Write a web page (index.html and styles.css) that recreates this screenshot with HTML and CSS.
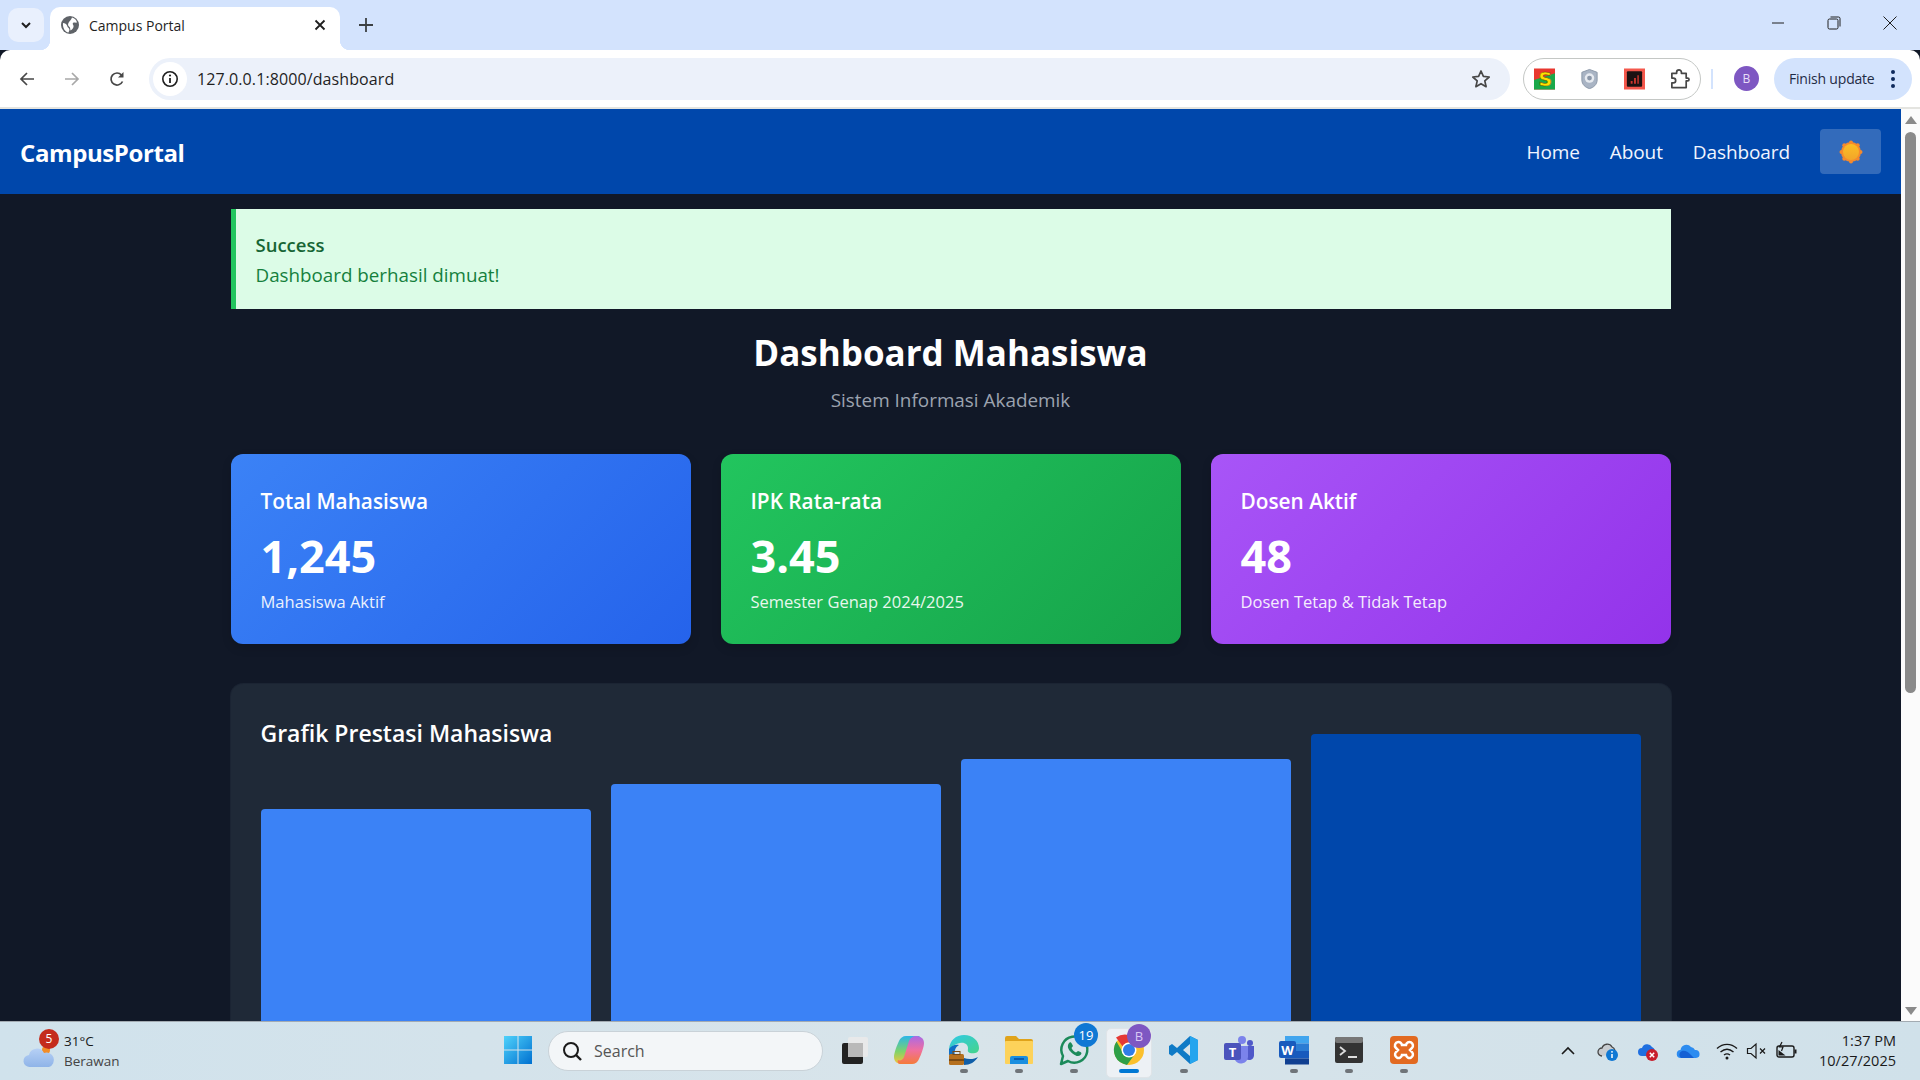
FILE: index.html
```html
<!DOCTYPE html>
<html lang="en">
<head>
    <meta charset="UTF-8">
    <meta name="viewport" content="width=device-width, initial-scale=1.0">
    <title>Campus Portal</title>
    <link rel="stylesheet" href="styles.css">
</head>
<body>

<!-- Browser tabs -->
<div class="tab-strip">
    <div class="tab-search">
        <svg width="14" height="14" viewBox="0 0 14 14"><path d="M3 5l4 4 4-4" fill="none" stroke="#1f1f1f" stroke-width="2"/></svg>
    </div>
    <div class="tab">
        <svg width="18" height="18" viewBox="0 0 18 18"><circle cx="9" cy="9" r="9" fill="#5f6368"/><path d="M11 1.500c2.500.5 4.500 2.500 5 5-1.500.5-3-.5-4 .5s1 2 .5 4-2 3-3 3.500c-.5-1.500 0-3-1.500-4s-1-3 0-4.500 2.500-2.500 3-4.500zM2 7c2 0 3.500 1 4 2.500s1 2 2 3 0 3-.5 4C4 16 1.500 12 2 7z" fill="#fff"/></svg>
        <span class="tab-title">Campus Portal</span>
        <svg class="tab-close" width="12" height="12" viewBox="0 0 12 12"><path d="M1.500 1.500l9 9M10.500 1.500l-9 9" stroke="#1f1f1f" stroke-width="1.800"/></svg>
    </div>
    <div class="new-tab">
        <svg width="14" height="14" viewBox="0 0 14 14"><path d="M7 0v14M0 7h14" stroke="#3c4043" stroke-width="1.800"/></svg>
    </div>
    <div class="window-controls">
        <div class="win-btn"><svg width="14" height="14" viewBox="0 0 14 14"><path d="M1 7h12" stroke="#1f1f1f" stroke-width="1"/></svg></div>
        <div class="win-btn"><svg width="14" height="14" viewBox="0 0 14 14"><rect x="1" y="3" width="10" height="10" rx="1.500" fill="none" stroke="#1f1f1f"/><path d="M3.500 1h8a1.500 1.500 0 0 1 1.500 1.500v8" fill="none" stroke="#1f1f1f"/></svg></div>
        <div class="win-btn"><svg width="14" height="14" viewBox="0 0 14 14"><path d="M.5.5l13 13M13.500.5l-13 13" stroke="#1f1f1f" stroke-width="1"/></svg></div>
    </div>
</div>

<!-- Browser toolbar -->
<div class="toolbar">
    <div class="tool-btn"><svg width="16" height="16" viewBox="0 0 16 16"><path d="M15 8H2M8 2L2 8l6 6" fill="none" stroke="#474747" stroke-width="1.700"/></svg></div>
    <div class="tool-btn"><svg width="16" height="16" viewBox="0 0 16 16"><path d="M1 8h13M8 2l6 6-6 6" fill="none" stroke="#a8a8a8" stroke-width="1.700"/></svg></div>
    <div class="tool-btn"><svg width="16" height="16" viewBox="0 0 16 16"><path d="M13.500 10.500A6 6 0 1 1 12.500 4" fill="none" stroke="#474747" stroke-width="1.700"/><path d="M14.500 1v5.500H9z" fill="#474747"/></svg></div>
    <div class="omnibox">
        <div class="site-info"><svg width="18" height="18" viewBox="0 0 18 18"><circle cx="9" cy="9" r="7.200" fill="none" stroke="#1f1f1f" stroke-width="1.600"/><path d="M9 8v5" stroke="#1f1f1f" stroke-width="1.800"/><circle cx="9" cy="5.500" r="1.100" fill="#1f1f1f"/></svg></div>
        <span class="url">127.0.0.1:8000/dashboard</span>
        <svg class="star" width="20" height="20" viewBox="0 0 20 20"><path d="M10 2l2.400 5.400 5.800.6-4.400 3.900 1.300 5.800L10 14.700l-5.100 3 1.300-5.800L1.800 8l5.800-.6z" fill="none" stroke="#474747" stroke-width="1.700" stroke-linejoin="round"/></svg>
    </div>
    <div class="ext-pill">
        <svg width="22" height="22" viewBox="0 0 22 22"><rect width="22" height="22" fill="#e8372f"/><path d="M0 22V12L22 5v17z" fill="#1aa84a"/><text x="12" y="18" class="ext-s">S</text></svg>
        <svg width="22" height="22" viewBox="0 0 22 22"><path d="M11 1l8 3v8c0 5-4 8-8 9-4-1-8-4-8-9V4z" fill="#a9b4c4" stroke="#8b97a8"/><circle cx="11" cy="10" r="5" fill="#e6eaf0"/><circle cx="11" cy="10" r="2.500" fill="#8b97a8"/></svg>
        <svg width="22" height="22" viewBox="0 0 22 22"><rect width="22" height="22" fill="#f4584c"/><rect x="3" y="3" width="16" height="16" rx="1" fill="#1b1212"/><path d="M7 13h2v3H7zM10.500 10h2v6h-2zM14 7h1.500v9H14z" fill="#c9352c"/></svg>
        <svg width="22" height="22" viewBox="0 0 22 22"><path d="M3 5h5V4a2.500 2.500 0 0 1 5 0v1h5v5h1.500a1.500 1.500 0 0 1 0 3H18v7H3v-5h1.500a2.500 2.500 0 0 0 0-5H3z" fill="none" stroke="#474747" stroke-width="1.800" stroke-linejoin="round"/></svg>
    </div>
    <div class="toolbar-sep"></div>
    <div class="avatar">B</div>
    <div class="finish-update">
        <span>Finish update</span>
        <span class="kebab"><i></i><i></i><i></i></span>
    </div>
</div>

<!-- Page area -->
<div class="viewport">
    <div class="page">
        <nav class="navbar">
            <div class="brand">CampusPortal</div>
            <div class="nav-links">
                <a>Home</a>
                <a>About</a>
                <a>Dashboard</a>
                <button class="theme-toggle">
                    <svg width="24" height="24" viewBox="0 0 24 24">
                        <defs><linearGradient id="sunFill" x1="0" y1="0" x2="0" y2="1"><stop offset="0" stop-color="#fbbf24"/><stop offset="1" stop-color="#f2a52a"/></linearGradient></defs>
                        <g fill="#f58a2c">
                            <circle cx="12" cy="2.500" r="2"/><circle cx="12" cy="21.500" r="2"/><circle cx="2.500" cy="12" r="2"/><circle cx="21.500" cy="12" r="2"/>
                            <circle cx="5.300" cy="5.300" r="2"/><circle cx="18.700" cy="5.300" r="2"/><circle cx="5.300" cy="18.700" r="2"/><circle cx="18.700" cy="18.700" r="2"/>
                            <circle cx="12" cy="12" r="10"/>
                        </g>
                        <circle cx="12" cy="12" r="8" fill="url(#sunFill)"/>
                    </svg>
                </button>
            </div>
        </nav>

        <main class="container">
            <div class="alert">
                <div class="alert-title">Success</div>
                <div class="alert-text">Dashboard berhasil dimuat!</div>
            </div>

            <div class="heading">
                <h1>Dashboard Mahasiswa</h1>
                <p>Sistem Informasi Akademik</p>
            </div>

            <div class="stats">
                <div class="stat-card blue">
                    <h3>Total Mahasiswa</h3>
                    <div class="stat-value">1,245</div>
                    <p>Mahasiswa Aktif</p>
                </div>
                <div class="stat-card green">
                    <h3>IPK Rata-rata</h3>
                    <div class="stat-value">3.45</div>
                    <p>Semester Genap 2024/2025</p>
                </div>
                <div class="stat-card purple">
                    <h3>Dosen Aktif</h3>
                    <div class="stat-value">48</div>
                    <p>Dosen Tetap &amp; Tidak Tetap</p>
                </div>
            </div>

            <section class="chart-panel">
                <h2>Grafik Prestasi Mahasiswa</h2>
                <div class="bars">
                    <div class="bar h1"></div>
                    <div class="bar h2"></div>
                    <div class="bar h3"></div>
                    <div class="bar h4 dark"></div>
                </div>
            </section>
        </main>
    </div>

    <div class="scrollbar">
        <div class="arrow-up"></div>
        <div class="thumb"></div>
        <div class="arrow-down"></div>
    </div>
</div>

<!-- Windows taskbar -->
<footer class="taskbar">
    <div class="weather">
        <div class="weather-icon">
            <svg width="34" height="30" viewBox="0 0 34 30">
                <defs><linearGradient id="cloudFill" x1="0" y1="0" x2="0" y2="1"><stop offset="0" stop-color="#b6d0f5"/><stop offset="1" stop-color="#8fb4e8"/></linearGradient></defs>
                <circle cx="23" cy="11" r="4" fill="#f28c28"/>
                <path d="M7 28a6 6 0 0 1-1-12 8 8 0 0 1 15-2 7 7 0 0 1 5 14z" fill="url(#cloudFill)"/>
            </svg>
            <span class="weather-badge">5</span>
        </div>
        <div class="weather-text">
            <div class="temp">31°C</div>
            <div class="cond">Berawan</div>
        </div>
    </div>

    <div class="app winlogo">
        <svg width="30" height="30" viewBox="0 0 30 30">
            <defs><linearGradient id="winFill" x1="0" y1="0" x2="1" y2="1"><stop offset="0" stop-color="#4fd2fb"/><stop offset="1" stop-color="#0070d0"/></linearGradient></defs>
            <path d="M1 1h13.500v13.500H1zM15.500 1H29v13.500H15.500zM1 15.500h13.500V29H1zM15.500 15.500H29V29H15.500z" fill="url(#winFill)"/>
        </svg>
    </div>

    <div class="search-box">
        <svg width="22" height="22" viewBox="0 0 22 22"><circle cx="10" cy="10" r="7" fill="none" stroke="#1a1a1a" stroke-width="2"/><path d="M15 15l5 5" stroke="#1a1a1a" stroke-width="2.400"/></svg>
        <span>Search</span>
    </div>

    <div class="app">
        <svg width="30" height="30" viewBox="0 0 30 30"><rect x="3" y="8" width="21" height="21" rx="2" fill="#222"/><rect x="9" y="2" width="20" height="20" rx="2" fill="#e9e9e9" opacity=".92"/><rect x="9" y="8" width="15" height="14" fill="#b9b9b9"/></svg>
    </div>
    <div class="app">
        <svg width="32" height="32" viewBox="0 0 32 32">
            <defs><linearGradient id="copA" x1="0.500" y1="0" x2="0.500" y2="1"><stop offset="0" stop-color="#2bb6e8"/><stop offset=".55" stop-color="#7ed36a"/><stop offset="1" stop-color="#f8c33a"/></linearGradient><linearGradient id="copB" x1="0.500" y1="0" x2="0.500" y2="1"><stop offset="0" stop-color="#f57b3a"/><stop offset=".5" stop-color="#ef6fa0"/><stop offset="1" stop-color="#a96ae6"/></linearGradient></defs>
            <path d="M13 2h12c2 0 3 2 2 4-2-1-5 0-6 3l-5 16c-1 3-4 5-7 5-4 0-8-2-8-7 0-4 3-12 5-16 1-3 4-5 7-5z" fill="url(#copA)"/>
            <path d="M13 2h12c2 0 3 2 2 4-2-1-5 0-6 3l-5 16c-1 3-4 5-7 5-4 0-8-2-8-7 0-4 3-12 5-16 1-3 4-5 7-5z" fill="url(#copB)" transform="rotate(180 16 16)"/>
        </svg>
    </div>
    <div class="app running">
        <svg width="32" height="32" viewBox="0 0 32 32">
            <defs><linearGradient id="edgeFill" x1="0" y1="0" x2="1" y2="1"><stop offset="0" stop-color="#2fc9e8"/><stop offset="1" stop-color="#46d48a"/></linearGradient></defs>
            <path d="M1 15C2 6 8 1 16 1c9 0 15 6 15 13 0 5-5 6-9 5-3-1-2-3-2-5 0-3-3-6-8-5-6 1-9 5-11 6z" fill="url(#edgeFill)"/>
            <path d="M1 15c2-3 6-5 10-4-4 2-5 7-4 10H1z" fill="#0f6fc6"/>
            <path d="M16 31c6 0 11-3 14-8-3 2-9 3-14 1z" fill="#0f5ea8"/>
            <rect x="1" y="20" width="15" height="11" rx="1.500" fill="#b5701e"/><rect x="1" y="25" width="15" height="2" fill="#7a4a12"/><rect x="5" y="17.500" width="7" height="3" fill="none" stroke="#7a4a12"/>
        </svg>
    </div>
    <div class="app running">
        <svg width="32" height="32" viewBox="0 0 32 32">
            <path d="M2 4a2 2 0 0 1 2-2h9l3 3h12a2 2 0 0 1 2 2v3H2z" fill="#e0a31a"/>
            <rect x="2" y="7" width="28" height="23" rx="1" fill="#fdd25a"/>
            <path d="M7 30v-6a2 2 0 0 1 2-2h14a2 2 0 0 1 2 2v6z" fill="#1a8fe0"/>
            <rect x="11" y="24" width="10" height="2" fill="#0b5cad"/>
        </svg>
    </div>
    <div class="app running">
        <svg width="32" height="32" viewBox="0 0 32 32">
            <path d="M3 30l2-8a13 13 0 1 1 5 5z" fill="none" stroke="#1b8a5a" stroke-width="2.500" stroke-linejoin="round"/>
            <path d="M11 9c1-1 2-1 3 1l1 2-1.500 2c1 2 2.500 3.500 4.500 4.500l2-1.500 2.500 1c1.500 1 1 2 0 3-2 2-5 1-8-1.500S8 13 11 9z" fill="#1b8a5a"/>
        </svg>
        <span class="count-badge">19</span>
    </div>
    <div class="app running active">
        <div class="active-back"></div>
        <svg width="32" height="32" viewBox="0 0 32 32">
            <circle cx="16" cy="16" r="15" fill="#fbc02d"/>
            <path d="M16 1a15 15 0 0 1 13 7.500H16a7.500 7.500 0 0 0-6.500 3.800L3 3.500A15 15 0 0 1 16 1z" fill="#e53935"/>
            <path d="M3.500 7.500A15 15 0 0 0 14 30.900l6.500-9a7.500 7.500 0 0 1-11-4z" fill="#2e9f48"/>
            <circle cx="16" cy="16" r="7.500" fill="#fff"/><circle cx="16" cy="16" r="6" fill="#2f7de8"/>
        </svg>
        <span class="profile-badge">B</span>
    </div>
    <div class="app running">
        <svg width="30" height="30" viewBox="0 0 30 30">
            <path d="M21 1l8 4v20l-8 4-13-12-5 4-3-2V11l3-2 5 4zm0 8l-7 6 7 6z" fill="#0f7ac6"/>
            <path d="M21 1l8 4v20l-8 4z" fill="#25a5ee"/>
        </svg>
    </div>
    <div class="app">
        <svg width="32" height="32" viewBox="0 0 32 32">
            <circle cx="19" cy="6" r="4" fill="#7b83eb"/><circle cx="27" cy="9" r="3" fill="#5059c9"/>
            <path d="M22 12h9v9c0 3-2 5-5 5-2 0-4-1-4-3z" fill="#5059c9"/>
            <path d="M12 12h13v11a7 7 0 0 1-13 3z" fill="#7b83eb"/>
            <rect x="1" y="9" width="17" height="17" rx="2" fill="#4b53bc"/>
            <text x="9.500" y="22.500" class="app-letter">T</text>
        </svg>
    </div>
    <div class="app running">
        <svg width="32" height="32" viewBox="0 0 32 32">
            <rect x="7" y="2" width="24" height="7.500" fill="#41a5ee"/><rect x="7" y="9.500" width="24" height="7.500" fill="#2b7cd3"/><rect x="7" y="17" width="24" height="7.500" fill="#185abd"/><rect x="7" y="24.500" width="24" height="6" fill="#103f91"/>
            <rect x="1" y="7" width="17" height="17" rx="2" fill="#185abd"/>
            <text x="9.500" y="20.500" class="app-letter">W</text>
        </svg>
    </div>
    <div class="app running">
        <svg width="32" height="32" viewBox="0 0 32 32">
            <rect x="2" y="3" width="28" height="26" rx="2" fill="#333"/><rect x="2" y="3" width="28" height="6" rx="2" fill="#777"/>
            <path d="M7 13l5 4-5 4" fill="none" stroke="#ddd" stroke-width="1.800"/><path d="M15 23h9" stroke="#ddd" stroke-width="2"/>
        </svg>
    </div>
    <div class="app running">
        <svg width="32" height="32" viewBox="0 0 32 32">
            <rect x="2" y="2" width="28" height="28" rx="4" fill="#e26a21"/>
            <path d="M10 8a3.500 3.500 0 0 0-2 6l2 2-2 2a3.500 3.500 0 1 0 6 3h4a3.500 3.500 0 1 0 6-3l-2-2 2-2a3.500 3.500 0 1 0-6-3h-4a3.500 3.500 0 0 0-4-3z" fill="none" stroke="#fff" stroke-width="2.500"/>
        </svg>
    </div>

    <div class="tray">
        <div class="tray-item"><svg width="16" height="16" viewBox="0 0 16 16"><path d="M2 11l6-6 6 6" fill="none" stroke="#1a1a1a" stroke-width="1.600"/></svg></div>
        <div class="tray-item">
            <svg width="22" height="22" viewBox="0 0 22 22"><path d="M5 16a4 4 0 0 1 0-8 5.500 5.500 0 0 1 10-1 4.500 4.500 0 0 1 2 7" fill="#c8ccd0" stroke="#444" stroke-width="1.300"/><circle cx="15" cy="15" r="6" fill="#0f78d4"/><path d="M15 14v4" stroke="#fff" stroke-width="1.500"/><circle cx="15" cy="11.800" r=".9" fill="#fff"/></svg>
        </div>
        <div class="tray-item">
            <svg width="22" height="22" viewBox="0 0 22 22"><path d="M5 16a4 4 0 0 1 0-8 5.500 5.500 0 0 1 10-1 4.500 4.500 0 0 1 2 7v2z" fill="#1f6fe0"/><circle cx="15" cy="15" r="6" fill="#c81e2c"/><path d="M12.800 12.800l4.400 4.400M17.200 12.800l-4.400 4.400" stroke="#fff" stroke-width="1.500"/></svg>
        </div>
        <div class="tray-item">
            <svg width="24" height="18" viewBox="0 0 24 18"><path d="M5 16a4 4 0 0 1-.5-8A6 6 0 0 1 15 5a5 5 0 0 1 4 3 4 4 0 0 1 1 8z" fill="#2d8cf0"/><path d="M5 16a4 4 0 0 1 1-7c3-1 6 1 8 3l4 4z" fill="#1560d4"/></svg>
        </div>
        <div class="tray-item small wifi">
            <svg width="22" height="18" viewBox="0 0 22 18"><path d="M1 6.500c6-5.500 14-5.500 20 0M4.500 10c4-3.500 9-3.500 13 0M8 13c2-1.500 4-1.500 6 0" fill="none" stroke="#1a1a1a" stroke-width="1.400"/><circle cx="11" cy="16" r="1.500" fill="#1a1a1a"/></svg>
        </div>
        <div class="tray-item small">
            <svg width="22" height="18" viewBox="0 0 22 18"><path d="M1.500 6.500h3.500L10 2v14l-5-4.500H1.500z" fill="none" stroke="#1a1a1a" stroke-width="1.200"/><path d="M14 6.500l5 5M19 6.500l-5 5" stroke="#1a1a1a" stroke-width="1.200"/></svg>
        </div>
        <div class="tray-item small">
            <svg width="22" height="20" viewBox="0 0 22 20"><rect x="1" y="5" width="17" height="11" rx="2" fill="none" stroke="#1a1a1a" stroke-width="1.400"/><rect x="18.500" y="8.500" width="2" height="4" fill="#1a1a1a"/><path d="M2.500 14.500V9l7 5.500z" fill="#1a1a1a"/><path d="M6 1L3.500 6H7L5.500 10" fill="none" stroke="#1a1a1a" stroke-width="1.200"/></svg>
        </div>
        <div class="clock">
            <div>1:37 PM</div>
            <div>10/27/2025</div>
        </div>
    </div>
</footer>

</body>
</html>
```

FILE: styles.css
```css
/* General Reset */
* {
    box-sizing: border-box;
}

body {
    margin: 0;
    padding: 0;
    height: 100vh;
    overflow: hidden;
    display: flex;
    flex-direction: column;
    font-family: "Open Sans", "Liberation Sans", sans-serif;
    background: #111827;
}

/* Browser tabs */
.tab-strip {
    flex: 0 0 50px;
    display: flex;
    align-items: flex-end;
    background: #d3e3fd;
}

.tab-search {
    width: 36px;
    height: 34px;
    margin: 0 6px 8px 8px;
    display: flex;
    align-items: center;
    justify-content: center;
    background: #e9f0fd;
    border-radius: 10px;
}

.tab {
    width: 290px;
    height: 43px;
    display: flex;
    align-items: center;
    padding: 0 14px 7px 11px;
    background: #fff;
    border-radius: 10px 10px 0 0;
    position: relative;
}

/* little curves at the foot of the tab */
.tab::before,
.tab::after {
    content: "";
    position: absolute;
    bottom: 0;
    width: 10px;
    height: 10px;
}

.tab::before {
    left: -10px;
    background: radial-gradient(circle at 0 0, #d3e3fd 10px, #fff 10.500px);
}

.tab::after {
    right: -10px;
    background: radial-gradient(circle at 100% 0, #d3e3fd 10px, #fff 10.500px);
}

.tab-title {
    margin-left: 10px;
    font-size: 14px;
    color: #1f1f1f;
    flex: 1;
}

.new-tab {
    width: 22px;
    height: 43px;
    margin-left: 15px;
    padding-bottom: 7px;
    display: flex;
    align-items: center;
    justify-content: center;
}

.window-controls {
    margin-left: auto;
    height: 50px;
    display: flex;
    padding-right: 2px;
    align-self: flex-start;
}

.win-btn {
    width: 56px;
    height: 46px;
    display: flex;
    align-items: center;
    justify-content: center;
}

/* Browser toolbar */
.toolbar {
    flex: 0 0 59px;
    display: flex;
    align-items: center;
    padding: 0 8px 0 9px;
    background: #fff;
    border-bottom: 2px solid #e4e4e0;
    border-radius: 10px 10px 0 0;
}

.tool-btn {
    width: 36px;
    height: 36px;
    margin-right: 9px;
    display: flex;
    align-items: center;
    justify-content: center;
}

.omnibox {
    flex: 1;
    height: 42px;
    margin-left: 5px;
    display: flex;
    align-items: center;
    padding: 0 19px 0 4px;
    background: #ecf1fa;
    border-radius: 21px;
}

.site-info {
    width: 34px;
    height: 34px;
    display: flex;
    align-items: center;
    justify-content: center;
    background: #fff;
    border-radius: 50%;
}

.url {
    margin-left: 10px;
    font-size: 16px;
    letter-spacing: 0.1px;
    color: #1f1f1f;
    flex: 1;
}

.ext-pill {
    width: 178px;
    height: 42px;
    margin-left: 13px;
    padding: 0 10px;
    display: flex;
    align-items: center;
    gap: 24px;
    background: #fff;
    border: 1px solid #c4c7c5;
    border-radius: 21px;
}

.ext-s {
    font-family: "DejaVu Sans", sans-serif;
    font-size: 20px;
    font-weight: 700;
    fill: #ffe100;
    stroke: #6b4a00;
    stroke-width: 0.5px;
    text-anchor: middle;
}

.toolbar-sep {
    width: 2px;
    height: 20px;
    margin-left: 10px;
    background: #d3e3fd;
}

.avatar {
    width: 25px;
    height: 25px;
    margin-left: 21px;
    border-radius: 50%;
    background: #7e57c2;
    color: #e8def8;
    font-size: 12px;
    display: flex;
    align-items: center;
    justify-content: center;
}

.finish-update {
    width: 138px;
    height: 42px;
    margin-left: 15px;
    padding: 0 17px 0 15px;
    display: flex;
    align-items: center;
    justify-content: space-between;
    background: #d3e3fd;
    border-radius: 21px;
    font-size: 14px;
    letter-spacing: -0.2px;
    color: #1f2b45;
}

.kebab {
    display: flex;
    flex-direction: column;
    gap: 3px;
}

.kebab i {
    width: 4px;
    height: 4px;
    border-radius: 50%;
    background: #0f2a5c;
}

/* Page area */
.viewport {
    flex: 1;
    min-height: 0;
    display: flex;
}

.page {
    flex: 1;
    min-width: 0;
    overflow: hidden;
    background: #111827;
}

.scrollbar {
    flex: 0 0 19px;
    display: flex;
    flex-direction: column;
    align-items: center;
    background: #fbfbfb;
}

.arrow-up,
.arrow-down {
    width: 0;
    height: 0;
    border-left: 6px solid transparent;
    border-right: 6px solid transparent;
}

.arrow-up {
    margin-top: 7px;
    border-bottom: 8px solid #8a8a8a;
}

.arrow-down {
    margin-top: auto;
    margin-bottom: 6px;
    border-top: 8px solid #8a8a8a;
}

.thumb {
    width: 11px;
    height: 561px;
    margin-top: 8px;
    background: #8a8a8a;
    border-radius: 6px;
}

/* Navbar */
.navbar {
    height: 85px;
    padding: 0 20px;
    display: flex;
    align-items: center;
    justify-content: space-between;
    background: #0047ab;
    color: #fff;
}

.brand {
    font-size: 24px;
    font-weight: 700;
    letter-spacing: -0.4px;
    padding-top: 1px;
}

.nav-links {
    display: flex;
    align-items: center;
    gap: 30px;
}

.nav-links a {
    font-size: 19px;
    letter-spacing: -0.1px;
    padding-top: 1px;
    color: #f1f5ff;
}

.theme-toggle {
    width: 61px;
    height: 45px;
    padding: 0;
    display: flex;
    align-items: center;
    justify-content: center;
    border: none;
    border-radius: 4px;
    background: rgba(255, 255, 255, 0.2);
    cursor: pointer;
}

/* Main content */
.container {
    width: 1440px;
    margin: 0 auto;
    padding-top: 15px;
}

.alert {
    height: 100px;
    padding: 21px 20px 0;
    background: #dcfce7;
    border-left: 5px solid #22c55e;
    color: #15803d;
}

.alert-title {
    font-size: 18.500px;
    font-weight: 600;
    line-height: 30px;
    color: #166534;
}

.alert-text {
    font-size: 18.800px;
    line-height: 30px;
}

.heading {
    margin-top: 22px;
    text-align: center;
}

.heading h1 {
    margin: 0;
    font-size: 35px;
    line-height: 44px;
    font-weight: 700;
    color: #fff;
}

.heading p {
    margin: 10px 0 0;
    font-size: 18.900px;
    line-height: 30px;
    color: #9ca3af;
}

.stats {
    margin-top: 39px;
    display: grid;
    grid-template-columns: repeat(3, 1fr);
    gap: 30px;
}

.stat-card {
    height: 190px;
    padding: 30px;
    border-radius: 12px;
    color: #fff;
    box-shadow: 0 4px 10px rgba(0, 0, 0, 0.15);
}

.stat-card.blue {
    background: linear-gradient(135deg, #3b82f6, #2563eb);
}

.stat-card.green {
    background: linear-gradient(135deg, #22c55e, #16a34a);
}

.stat-card.purple {
    background: linear-gradient(135deg, #a855f7, #9333ea);
}

.stat-card h3 {
    margin: 0;
    font-size: 20.800px;
    line-height: 34px;
    font-weight: 600;
}

.stat-value {
    margin-top: 8px;
    font-size: 45px;
    line-height: 60px;
    font-weight: 700;
}

.stat-card p {
    margin: 3px 0 0;
    font-size: 16.500px;
    line-height: 26px;
    opacity: 0.9;
}

/* Chart */
.chart-panel {
    margin-top: 40px;
    padding: 30px;
    background: #1f2937;
    border-radius: 12px;
    box-shadow: 0 0 0 1px #1b2433;
}

.chart-panel h2 {
    margin: 0 0 -18px;
    font-size: 23px;
    line-height: 38px;
    font-weight: 600;
    color: #fff;
}

.bars {
    height: 400px;
    display: grid;
    grid-template-columns: repeat(4, 1fr);
    gap: 20px;
    align-items: end;
}

.bar {
    background: #3b82f6;
    border-radius: 4px 4px 0 0;
}

.bar.dark {
    background: #0047ab;
}

.bar.h1 { height: 325px; }
.bar.h2 { height: 350px; }
.bar.h3 { height: 375px; }
.bar.h4 { height: 400px; }

/* Windows taskbar */
.taskbar {
    flex: 0 0 59px;
    display: flex;
    align-items: center;
    background: linear-gradient(90deg, #d0e2ec, #d8e4ea 50%, #d0e1ea);
    border-top: 1px solid #a3abb2;
}

.weather {
    width: 490px;
    display: flex;
    align-items: center;
    padding-left: 23px;
}

.weather-icon {
    width: 41px;
    height: 40px;
    position: relative;
    padding-top: 8px;
}

.weather-badge {
    position: absolute;
    left: 16px;
    top: -2px;
    width: 20px;
    height: 20px;
    border-radius: 50%;
    background: #c42b1c;
    color: #fff;
    font-size: 12px;
    line-height: 20px;
    text-align: center;
}

.temp {
    font-size: 13.500px;
    line-height: 20px;
    color: #1a1a1a;
}

.cond {
    font-size: 13.500px;
    line-height: 20px;
    color: #444;
}

.app {
    width: 55px;
    height: 58px;
    padding-bottom: 2px;
    display: flex;
    align-items: center;
    justify-content: center;
    position: relative;
}

/* pill under a running app */
.app.running::after {
    content: "";
    position: absolute;
    left: 24px;
    bottom: 7px;
    width: 8px;
    height: 4px;
    border-radius: 2px;
    background: #6f7479;
}

.app.active::after {
    left: 18px;
    width: 20px;
    background: #0078d4;
}

.active-back {
    position: absolute;
    left: 5px;
    top: 6px;
    width: 46px;
    height: 50px;
    background: #edf1f5;
    border: 1px solid #dfe4e8;
    border-radius: 5px;
}

.app svg {
    position: relative;
}

.app-letter {
    font-family: "Open Sans", sans-serif;
    font-size: 13px;
    font-weight: 700;
    fill: #fff;
    text-anchor: middle;
}

.count-badge {
    position: absolute;
    left: 28px;
    top: 1px;
    width: 24px;
    height: 24px;
    border-radius: 50%;
    background: #0f78d4;
    color: #fff;
    font-size: 13px;
    line-height: 24px;
    text-align: center;
}

.profile-badge {
    position: absolute;
    left: 26px;
    top: 2px;
    width: 24px;
    height: 24px;
    border-radius: 50%;
    background: #7e57c2;
    color: #d9c8f5;
    font-size: 13px;
    line-height: 24px;
    text-align: center;
}

.search-box {
    width: 275px;
    height: 40px;
    margin: 0 3px 0 3px;
    padding-left: 12px;
    display: flex;
    align-items: center;
    gap: 11px;
    background: #f3f6f8;
    border: 1px solid #c9d2d8;
    border-radius: 20px;
    font-size: 16px;
    color: #555;
}

.tray {
    margin-left: auto;
    display: flex;
    align-items: center;
}

.tray-item {
    width: 40px;
    display: flex;
    align-items: center;
    justify-content: center;
}

.tray-item.small {
    width: 30px;
}

.tray-item.wifi {
    margin-left: 4px;
}

.clock {
    width: 118px;
    padding-right: 24px;
    text-align: right;
    font-size: 14.500px;
    line-height: 20px;
    color: #1a1a1a;
    white-space: nowrap;
}
```
